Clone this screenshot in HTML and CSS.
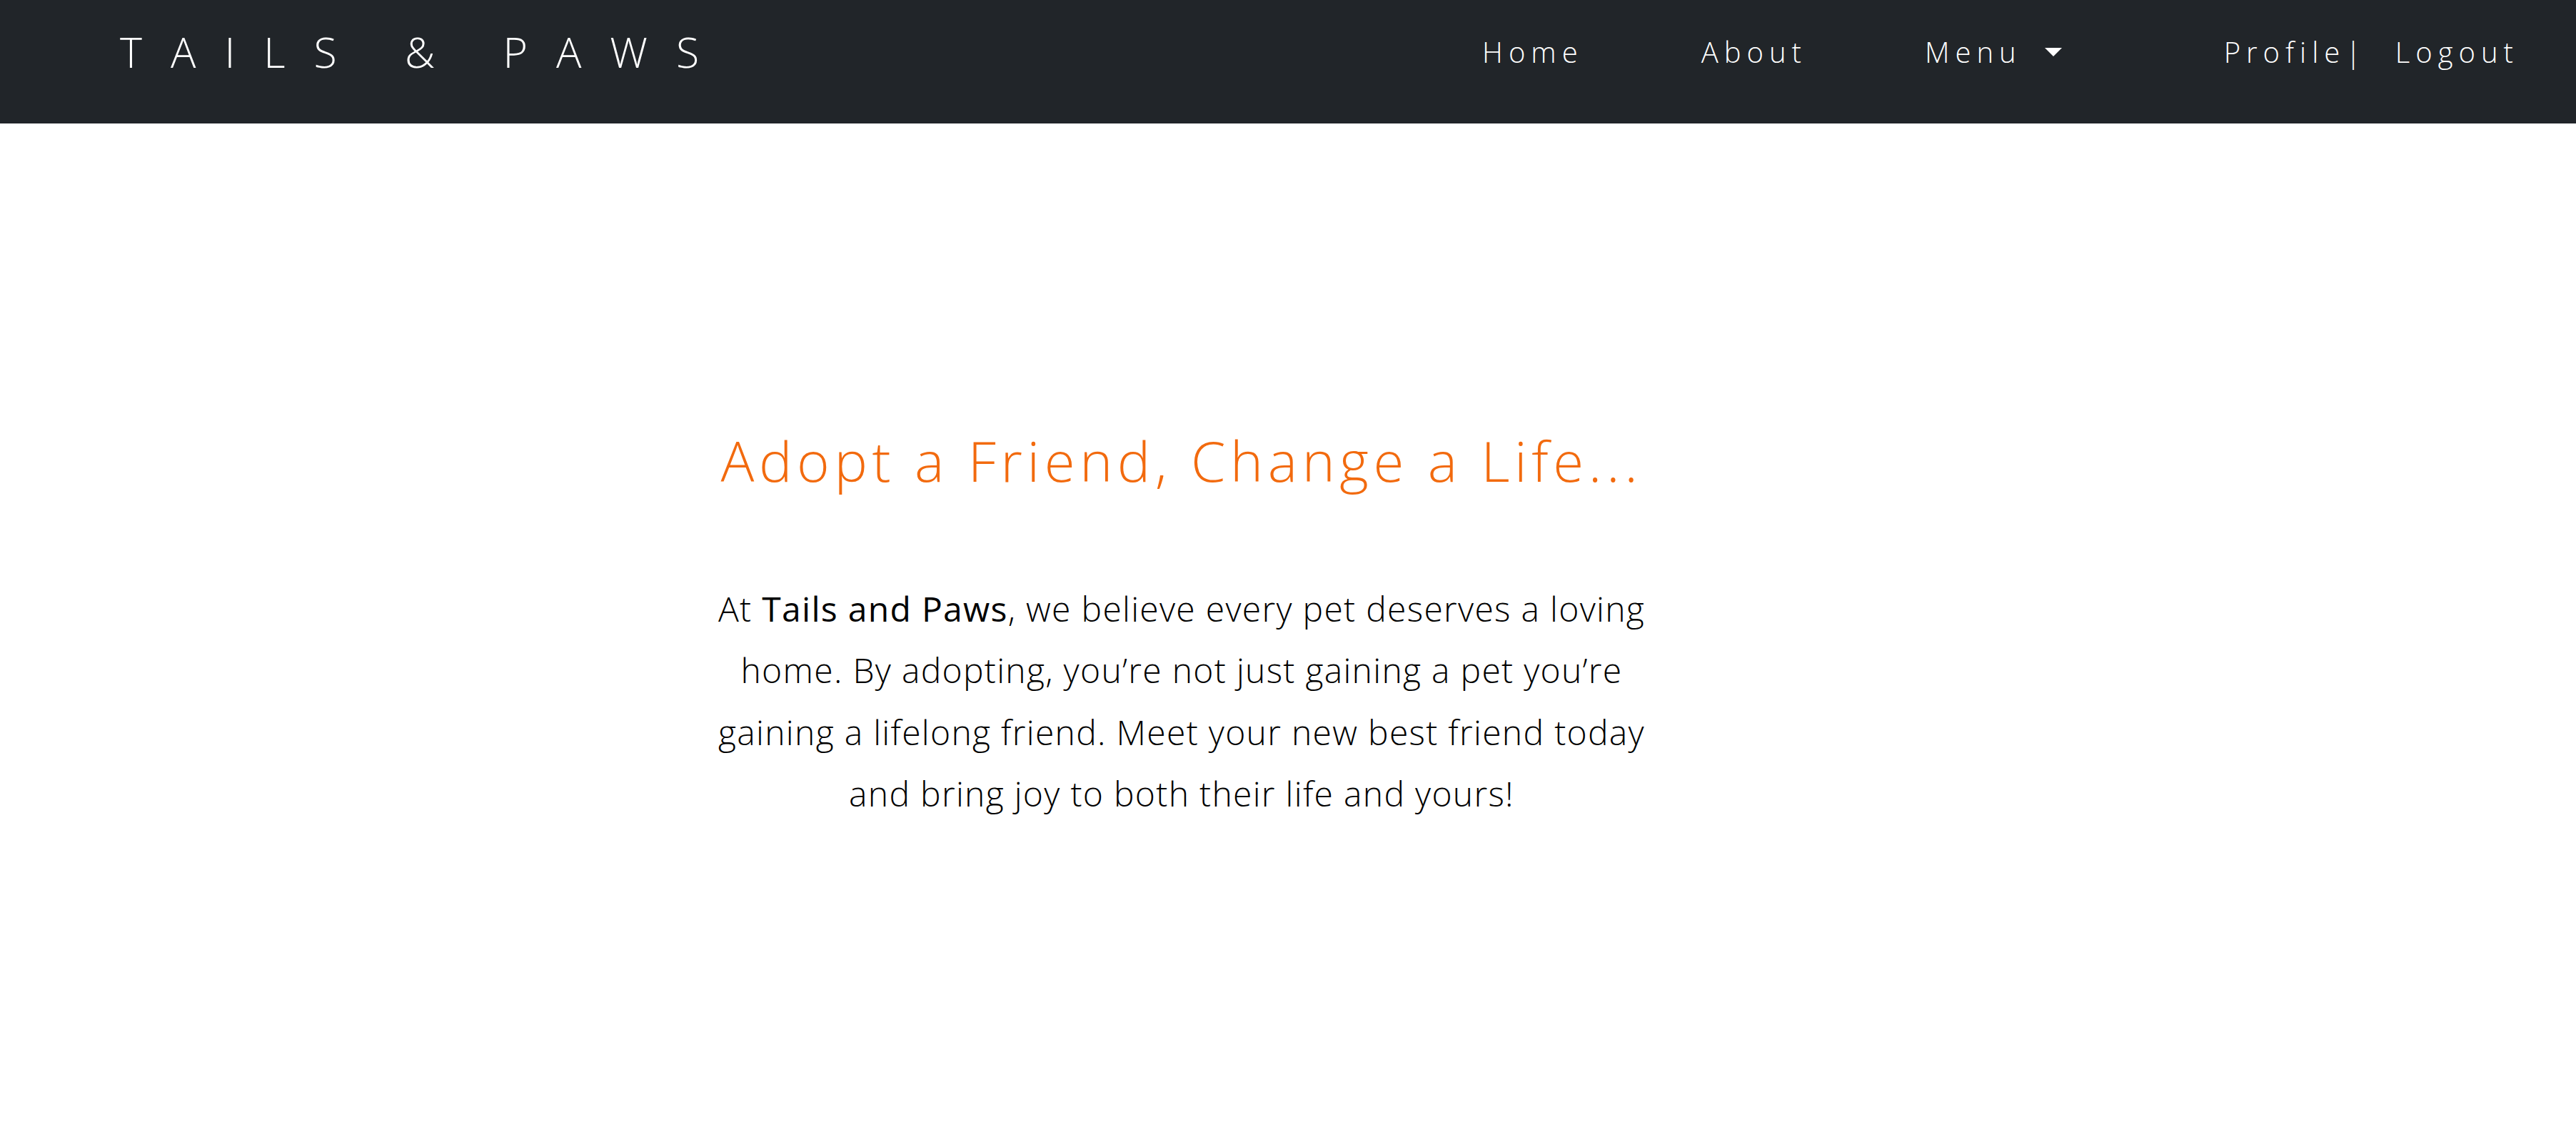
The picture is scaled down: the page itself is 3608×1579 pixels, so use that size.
FILE: index.html
```html
<!DOCTYPE html>
<html lang="en">
<head>
<meta charset="utf-8">
<title>Tails &amp; Paws</title>
<link rel="stylesheet" href="styles.css">
</head>
<body>
<nav class="navbar">
  <a class="brand" href="#">TAILS &amp; PAWS</a>
  <ul class="nav-links">
    <li><a href="#">Home</a></li>
    <li><a href="#">About</a></li>
    <li class="dropdown"><a href="#">Menu</a><span class="caret"></span></li>
  </ul>
  <div class="account">
    <a href="#">Profile</a><span class="sep">|</span><a href="#">Logout</a>
  </div>
</nav>
<main class="hero">
  <section class="hero-text">
    <h1 class="hero-title">Adopt a Friend, Change a Life...</h1>
    <p class="hero-body">At <strong>Tails and Paws</strong>, we believe every pet deserves a loving home. By adopting, you’re not just gaining a pet you’re gaining a lifelong friend. Meet your new best friend today and bring joy to both their life and yours!</p>
  </section>
</main>
</body>
</html>
```
FILE: styles.css
```css
* { box-sizing: border-box; }
body {
  margin: 0;
  background: #fff;
  font-family: "Open Sans", "Noto Sans", sans-serif;
  font-weight: 300;
  color: #000;
}
a { color: inherit; text-decoration: none; }
.navbar {
  height: 173px;
  background: #212529;
  color: #fff;
  display: flex;
  align-items: center;
  padding: 0 80px 28px 168px;
}
.brand {
  font-size: 59px;
  font-weight: 300;
  letter-spacing: 40px;
  line-height: 1;
}
.nav-links {
  list-style: none;
  margin: 0 0 0 auto;
  padding: 0;
  display: flex;
  align-items: center;
  gap: 165px;
}
.nav-links a, .account a, .account .sep {
  font-size: 40px;
  letter-spacing: 8px;
}
.dropdown { display: flex; align-items: center; }
.caret {
  margin-left: 32px;
  width: 0; height: 0;
  border-left: 12px solid transparent;
  border-right: 12px solid transparent;
  border-top: 12px solid #fff;
}
.account {
  margin-left: 227px;
  display: flex;
  align-items: center;
}
.account .sep { margin-right: 40px; }
.hero {
  display: flex;
  padding: 0 0 0 995px;
}
.hero-text {
  width: 1320px;
  text-align: center;
  padding-top: 426px;
}
.hero-title {
  margin: 0;
  font-size: 78px;
  font-weight: 300;
  color: #f26a0e;
  letter-spacing: 6.6px;
  line-height: 1.2;
}
.hero-body {
  margin: 117px 0 0;
  font-size: 48px;
  line-height: 86.5px;
  letter-spacing: 1.3px;
}
.hero-body strong { font-weight: 400; }
```
